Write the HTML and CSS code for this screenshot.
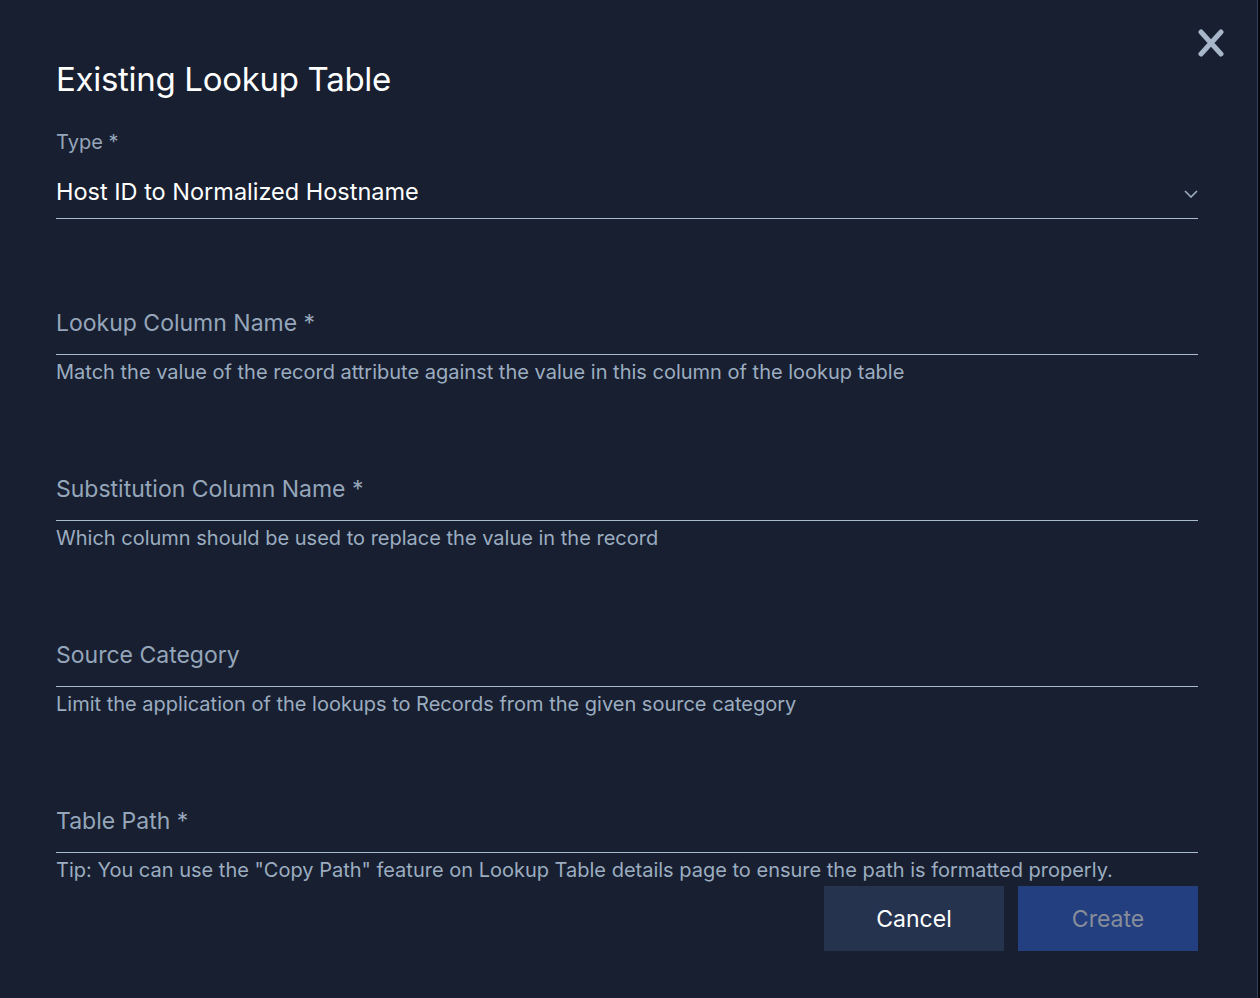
FILE: index.html
```html
<!DOCTYPE html>
<html lang="en">
<head>
<meta charset="utf-8">
<title>Existing Lookup Table</title>
<link rel="stylesheet" href="styles.css">
</head>
<body>
<div class="dialog">
  <button class="close" aria-label="Close">
    <svg width="26" height="28" viewBox="0 0 26 28"><path d="M3 3 L23 25 M23 3 L3 25" stroke="#a7b6c9" stroke-width="5" stroke-linecap="round" fill="none"/></svg>
  </button>
  <h1 class="title">Existing Lookup Table</h1>
  <div class="select-field">
    <div class="select-label">Type *</div>
    <div class="select-row">
      <span class="select-value">Host ID to Normalized Hostname</span>
      <svg class="chevron" width="14" height="8" viewBox="0 0 14 8"><path d="M1 1 L7 7 L13 1" stroke="#9fb0c2" stroke-width="1.6" fill="none"/></svg>
    </div>
  </div>
  <div class="field first">
    <div class="input">Lookup Column Name *</div>
    <div class="help">Match the value of the record attribute against the value in this column of the lookup table</div>
  </div>
  <div class="field">
    <div class="input">Substitution Column Name *</div>
    <div class="help">Which column should be used to replace the value in the record</div>
  </div>
  <div class="field">
    <div class="input">Source Category</div>
    <div class="help">Limit the application of the lookups to Records from the given source category</div>
  </div>
  <div class="field">
    <div class="input">Table Path *</div>
    <div class="help">Tip: You can use the "Copy Path" feature on Lookup Table details page to ensure the path is formatted properly.</div>
  </div>
  <div class="actions">
    <button class="btn cancel">Cancel</button>
    <button class="btn create">Create</button>
  </div>
</div>
</body>
</html>
```
FILE: styles.css
```css
html, body {
  margin: 0;
  padding: 0;
  background: #050608;
}
body {
  font-family: Inter, "Noto Sans", sans-serif;
  width: 1260px;
  height: 998px;
  overflow: hidden;
}
.dialog {
  position: relative;
  box-sizing: border-box;
  width: 1258px;
  height: 998px;
  background: #181f30;
  border-right: 1px solid #34425e;
  padding: 0 59px 0 56px;
  display: flex;
  flex-direction: column;
}
.close {
  position: absolute;
  top: 29px;
  right: 33px;
  width: 26px;
  height: 28px;
  padding: 0;
  border: 0;
  background: none;
  display: block;
}
.close svg { display: block; }
.title {
  margin: 57px 0 0;
  font-size: 33px;
  line-height: 44px;
  font-weight: 400;
  color: #ffffff;
  letter-spacing: -0.3px;
}
.select-field {
  margin-top: 28px;
}
.select-label {
  font-size: 20px;
  line-height: 26px;
  color: #95a6ba;
}
.select-row {
  margin-top: 18px;
  display: flex;
  align-items: center;
  justify-content: space-between;
  height: 38px;
  border-bottom: 1px solid #a9bccc;
  padding-bottom: 7px;
}
.select-value {
  font-size: 23.5px;
  line-height: 30px;
  color: #ffffff;
}
.chevron { margin-top: 4px; }
.field {
  margin-top: 90px;
}
.field.first {
  margin-top: 89px;
}
.input {
  font-size: 23px;
  line-height: 30px;
  color: #95a6ba;
  padding-bottom: 16px;
  border-bottom: 1px solid #a9bccc;
}
.help {
  margin-top: 5px;
  font-size: 20px;
  line-height: 24px;
  color: #9cadc0;
}
.actions {
  margin-top: 4px;
  display: flex;
  justify-content: flex-end;
  gap: 14px;
}
.btn {
  width: 180px;
  height: 65px;
  border: 0;
  font-family: inherit;
  font-size: 23px;
}
.cancel {
  background: #26334f;
  color: #ffffff;
}
.create {
  background: #243f80;
  color: #878d99;
}
```
